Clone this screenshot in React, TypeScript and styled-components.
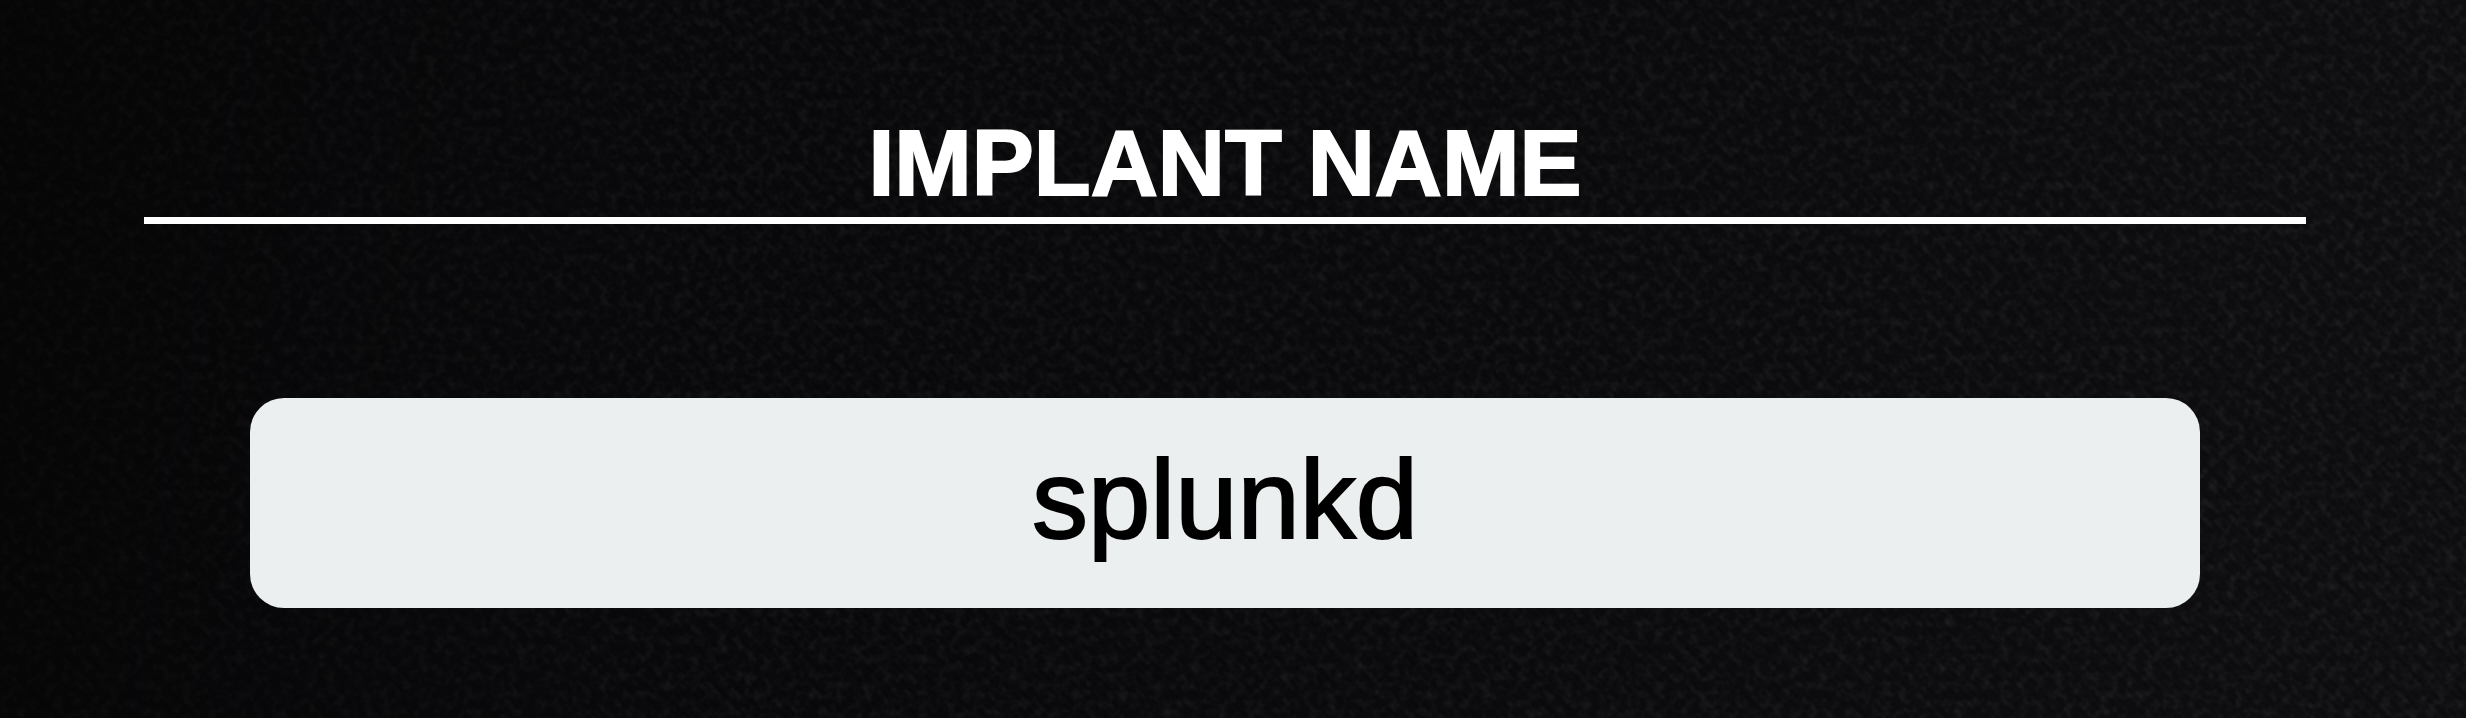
import React, { useState } from "react";
import styled, { createGlobalStyle } from "styled-components";

const GlobalStyle = createGlobalStyle`
  *, *::before, *::after { box-sizing: border-box; }
  body {
    margin: 0;
    background: #09090b;
    font-family: "Liberation Sans", Arial, Helvetica, sans-serif;
  }
`;

const Page = styled.main`
  position: relative;
  isolation: isolate;
  min-height: 100vh;
  padding: 112px 160px 108px 144px;
  background: linear-gradient(100deg, #060607 0%, #09090b 25%, #0b0b0d 60%, #0f0f11 100%);
`;

const Texture = styled.svg`
  position: absolute;
  inset: 0;
  z-index: -1;
  width: 100%;
  height: 100%;
`;

const Field = styled.div`
  display: flex;
  flex-direction: column;
  gap: 174px;
`;

const Title = styled.label`
  padding-bottom: 3px;
  border-bottom: 7px solid #ffffff;
  color: #ffffff;
  font-size: 93px;
  font-weight: 700;
  line-height: 102px;
  text-align: center;
  -webkit-text-stroke: 2px #ffffff;
`;

const NameInput = styled.input`
  align-self: stretch;
  min-width: 0;
  height: 210px;
  margin: 0 106px;
  padding: 0 32px 8px;
  border: 0;
  border-radius: 34px;
  outline: none;
  background: #ebeff0;
  color: #000000;
  font-family: inherit;
  font-size: 112px;
  text-align: center;
  -webkit-text-stroke: 2px #000000;
`;

function FabricTexture() {
  return (
    <Texture aria-hidden="true">
      <defs>
        <filter id="grain" x="0" y="0" width="100%" height="100%">
          <feTurbulence type="fractalNoise" baseFrequency="0.11" numOctaves="2" seed="7" />
          <feColorMatrix values="0 0 0 0 1  0 0 0 0 1  0 0 0 0 1.05  0.16 0 0 0 -0.065" />
        </filter>
        <pattern id="weave" width="10" height="10" patternUnits="userSpaceOnUse">
          <path d="M-2 -2L12 12M-2 8L2 12M8 -2L12 2" stroke="#000000" strokeOpacity="0.16" strokeWidth="3" />
        </pattern>
        <linearGradient id="fade">
          <stop offset="0" stopColor="#555555" />
          <stop offset="0.3" stopColor="#bbbbbb" />
          <stop offset="1" stopColor="#dddddd" />
        </linearGradient>
        <mask id="light">
          <rect width="100%" height="100%" fill="url(#fade)" />
        </mask>
      </defs>
      <g mask="url(#light)">
        <rect width="100%" height="100%" filter="url(#grain)" />
        <rect width="100%" height="100%" fill="url(#weave)" />
      </g>
    </Texture>
  );
}

export default function App() {
  const [name, setName] = useState("splunkd");
  return (
    <>
      <GlobalStyle />
      <Page>
        <FabricTexture />
        <Field>
          <Title htmlFor="implant-name">IMPLANT NAME</Title>
          <NameInput
            id="implant-name"
            type="text"
            spellCheck={false}
            value={name}
            onChange={(event) => setName(event.target.value)}
          />
        </Field>
      </Page>
    </>
  );
}
